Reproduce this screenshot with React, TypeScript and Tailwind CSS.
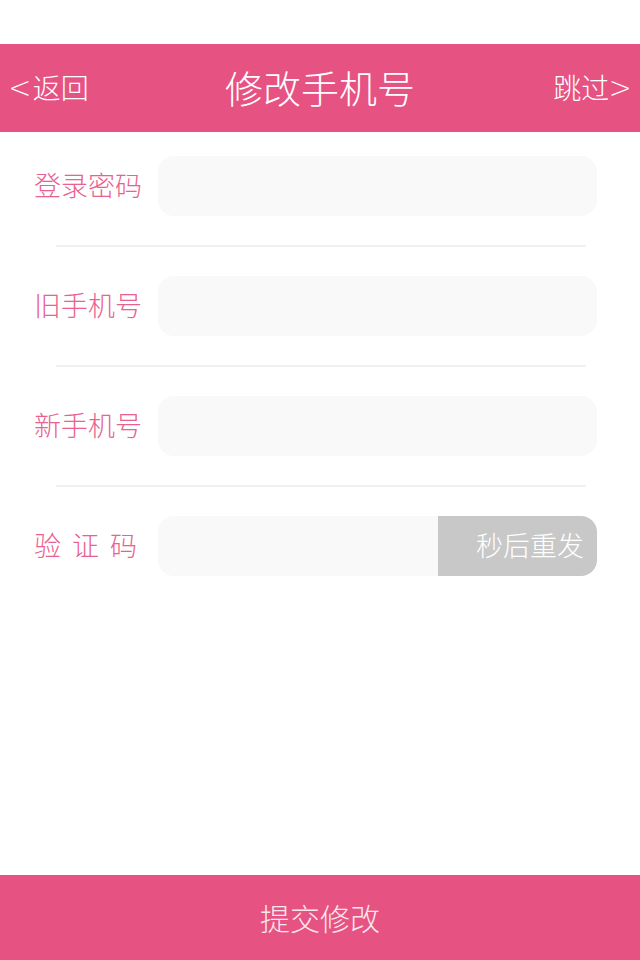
import React from "react";

const font = { fontFamily: '"Noto Sans CJK SC", "Noto Sans", sans-serif' };

function Row({ label, last, code }: { label: React.ReactNode; last?: boolean; code?: boolean }) {
  return (
    <div>
      <div className="flex items-center pl-[34px] pr-[43px]">
        <div className="w-[124px] shrink-0 text-[27px] font-light text-[#e9618f] leading-none whitespace-pre -mt-[3px]">{label}</div>
        <div className="flex-1 h-[60px] rounded-[16px] bg-[#f9f9f9] flex overflow-hidden">
          <div className="flex-1" />
          {code && (
            <div className="w-[159px] h-full bg-[#c8c8c8] flex items-center justify-end pr-[13px] text-[27px] font-light text-white leading-none">
              <span className="-mt-[3px]">秒后重发</span>
            </div>
          )}
        </div>
      </div>
      {!last && <div className="ml-[56px] w-[530px] h-[2px] bg-[#f0f0f0] my-[29px]" />}
    </div>
  );
}

export default function App() {
  return (
    <div className="min-h-screen flex flex-col bg-white" style={font}>
      <div className="h-[44px]" />
      <div className="h-[88px] bg-[#e65282] flex items-center justify-between px-[10px] relative">
        <div className="text-[28px] font-light text-white leading-none flex items-center -mt-[3px]">
          <span className="text-[38px] font-thin mr-[3px] -mt-[2px]">&lt;</span>返回
        </div>
        <div className="absolute left-0 right-0 text-center text-[38px] font-light text-white leading-none pointer-events-none -mt-[3px]">修改手机号</div>
        <div className="text-[28px] font-light text-white leading-none flex items-center -mt-[3px]">
          跳过<span className="text-[38px] font-thin ml-[1px] -mt-[2px]">&gt;</span>
        </div>
      </div>
      <div className="pt-[24px]">
        <Row label="登录密码" />
        <Row label="旧手机号" />
        <Row label="新手机号" />
        <Row
          label={
            <span className="flex">
              <span>验</span>
              <span className="ml-[11px]">证</span>
              <span className="ml-[11px]">码</span>
            </span>
          }
          last
          code
        />
      </div>
      <div className="flex-1" />
      <div className="h-[85px] bg-[#e65282] flex items-center justify-center text-[30px] font-light text-[#fbe6ee] leading-none">
        <span className="-mt-[2px]">提交修改</span>
      </div>
    </div>
  );
}
